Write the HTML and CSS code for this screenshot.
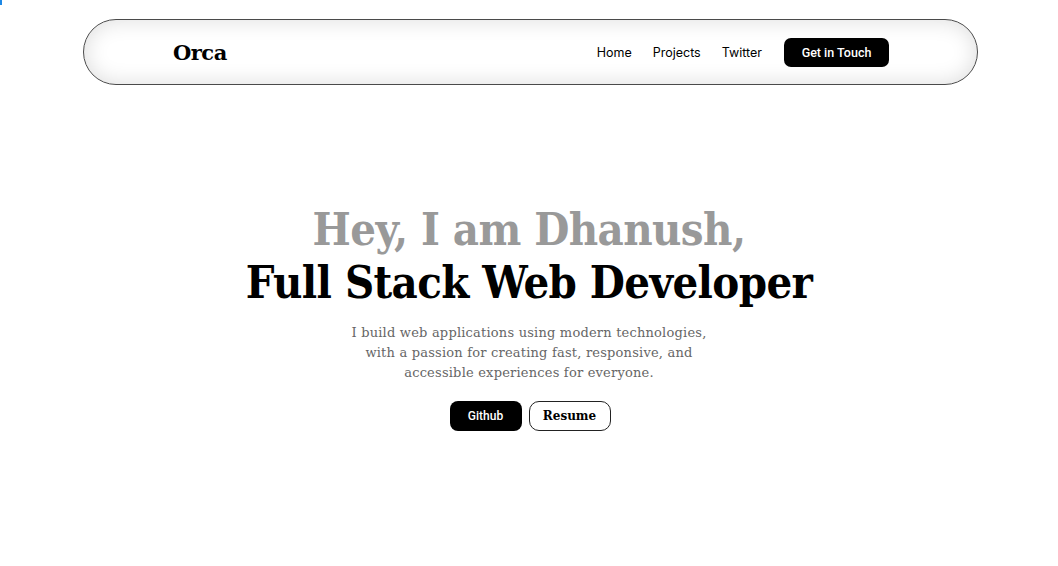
FILE: index.html
```html
<!DOCTYPE html>
<html lang="en">
<head>
<meta charset="utf-8">
<title>Orca</title>
<link rel="stylesheet" href="styles.css">
</head>
<body>
<span class="focus-mark"></span>
<header class="nav">
  <a class="logo" href="#">Orca</a>
  <nav class="links">
    <a href="#">Home</a>
    <a href="#">Projects</a>
    <a href="#">Twitter</a>
    <a class="cta" href="#">Get in Touch</a>
  </nav>
</header>
<main class="hero">
  <h1 class="title">
    <span class="greet">Hey, I am Dhanush,</span>
    <span class="role">Full Stack Web Developer</span>
  </h1>
  <p class="lead">I build web applications using modern technologies,<br>with a passion for creating fast, responsive, and<br>accessible experiences for everyone.</p>
  <div class="actions">
    <a class="btn btn-dark" href="#">Github</a>
    <a class="btn btn-outline" href="#">Resume</a>
  </div>
</main>
</body>
</html>
```
FILE: styles.css
```css
* { box-sizing: border-box; }
html, body { margin: 0; padding: 0; background: #fff; }
body { font-family: "Inter", "Roboto", sans-serif; color: #000; position: relative; min-height: 566px; }
a { text-decoration: none; color: inherit; }

.focus-mark {
  position: absolute; left: 0; top: 0;
  width: 2px; height: 5px; background: #1e88e5;
}

.nav {
  height: 66px;
  margin: 19px 80px 0 83px;
  padding: 0 88px 0 89px;
  border: 1px solid #4a4a4a;
  border-radius: 33px;
  background: #fff;
  box-shadow: inset 0 0 22px rgba(0,0,0,0.14);
  display: flex;
  align-items: center;
  justify-content: space-between;
}
.logo {
  font-family: "DejaVu Serif", serif;
  font-weight: 700;
  font-size: 21px;
  letter-spacing: -0.5px;
}
.links { display: flex; align-items: center; gap: 21px; font-size: 12.5px; }
.cta {
  background: #000; color: #fff;
  height: 29px; width: 105px; justify-content: center; margin-left: 1px;
  border-radius: 7px;
  display: flex; align-items: center;
  font-family: "Roboto", sans-serif;
  font-size: 12.5px;
  font-weight: 500;
}

.hero {
  display: flex; flex-direction: column; align-items: center;
  padding-top: 118px;
  text-align: center;
}
.title {
  margin: 0;
  font-family: "DejaVu Serif", serif;
  font-stretch: condensed;
  font-weight: 700;
  font-size: 45px;
  line-height: 53px;
  letter-spacing: -0.6px;
  display: flex; flex-direction: column;
}
.greet { color: #999; }
.role { color: #000; }
.lead {
  margin: 14px 0 0;
  font-family: "DejaVu Serif", serif;
  font-size: 13px;
  line-height: 20px;
  color: #666;
  letter-spacing: 0.2px;
}
.actions { display: flex; gap: 7px; margin-top: 18px; padding-left: 2px; }
.btn {
  height: 30px; display: flex; align-items: center; justify-content: center;
  font-size: 12px;
}
.btn-dark { width: 72px; background: #000; color: #fff; border-radius: 8px; font-family: "Roboto", sans-serif; font-weight: 500; }
.btn-outline { width: 82px; border: 1px solid #222; border-radius: 10px; font-family: "DejaVu Serif", serif; font-weight: 700; font-size: 12px; }
```
